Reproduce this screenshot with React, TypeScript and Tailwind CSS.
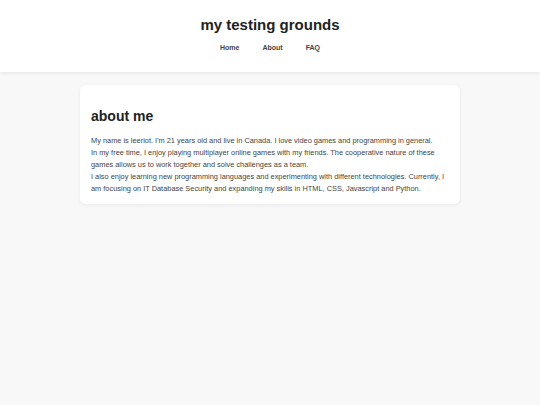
export default function App() {
  const navItems = ['Home', 'About', 'FAQ'];

  return (
    <div className="min-h-screen bg-[#f8f8f8] font-['Liberation_Sans',Arial,sans-serif] text-[#333] antialiased">
      {/* Header */}
      <header className="h-[72px] bg-white shadow-[0_1px_4px_rgba(0,0,0,0.08)] flex flex-col items-center pt-[16px]">
        <h1 className="text-[15px] leading-[18px] font-bold text-[#222]">my testing grounds</h1>
        <nav className="mt-[9px] flex gap-[23px]">
          {navItems.map((item) => (
            <a key={item} href="#" className="text-[7px] leading-[9px] font-bold text-[#444]">
              {item}
            </a>
          ))}
        </nav>
      </header>

      {/* About card */}
      <main className="flex justify-center pt-[13px]">
        <section className="w-[380px] bg-white rounded-[6px] shadow-[0_1px_4px_rgba(0,0,0,0.06)] px-[11px] pt-[22px] pb-[9px]">
          <h2 className="text-[14px] leading-[18px] font-bold text-[#222]">about me</h2>
          <p className="mt-[10px] text-[7.4px] leading-[12px] text-[#444]">
            My name is leeriot. I'm 21 years old and live in Canada. I love video games and programming in general.
            <br />
            In my free time, I enjoy playing multiplayer online games with my friends. The cooperative nature of these
            games allows us to work together and solve challenges as a team.
            <br />
            I also enjoy learning new programming languages and experimenting with different technologies. Currently, I
            am focusing on IT Database Security and expanding my skills in HTML, CSS, Javascript and Python.
          </p>
        </section>
      </main>
    </div>
  );
}
